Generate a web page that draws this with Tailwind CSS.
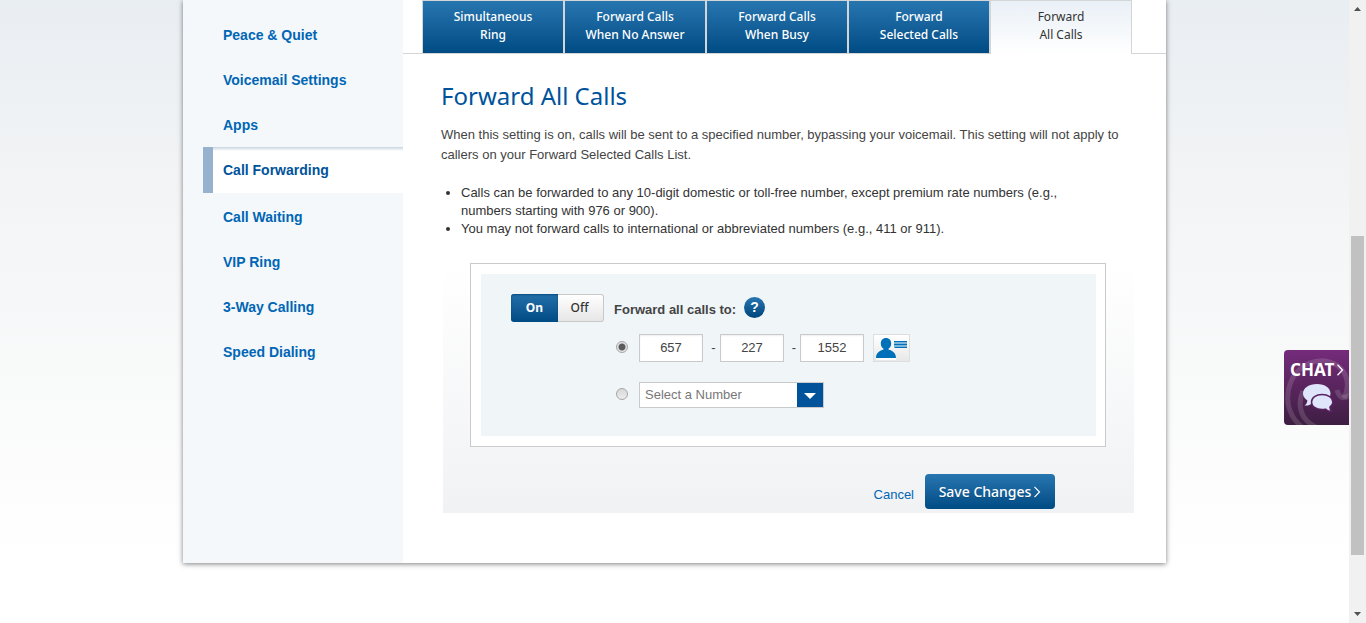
<!DOCTYPE html>
<html lang="en">
<head>
<meta charset="utf-8">
<meta name="viewport" content="width=device-width, initial-scale=1">
<title>Forward All Calls</title>
<script src="https://cdn.jsdelivr.net/npm/@tailwindcss/browser@4"></script>
</head>
<body class="flex h-screen overflow-hidden bg-white font-['Liberation_Sans',Arial,sans-serif] text-[13px] text-[#444]">
<div class="relative min-w-0 flex-1 bg-linear-to-b from-[#e9eef2] via-[#f4f5f6] via-35% to-white to-90%">
  <div class="mx-auto flex w-full max-w-[983px] bg-white shadow-[0_1px_5px_rgba(0,0,0,0.5)]">

    <nav aria-label="Settings" class="flex w-[220px] shrink-0 flex-col bg-[#f4f8fb] pt-3 pl-5 text-sm font-bold text-[#0066b5]">
      <a href="#" class="flex h-[45px] items-center pl-5">Peace &amp; Quiet</a>
      <a href="#" class="flex h-[45px] items-center pl-5">Voicemail Settings</a>
      <a href="#" class="flex h-[45px] items-center pl-5">Apps</a>
      <a href="#" aria-current="page" class="mb-px flex h-[46px] items-center border-l-10 border-[#97b2ce] bg-linear-to-b from-[#c9d5e0] to-white to-[4px] pl-[10px] text-[#00539b]">Call Forwarding</a>
      <a href="#" class="flex h-[45px] items-center pl-5">Call Waiting</a>
      <a href="#" class="flex h-[45px] items-center pl-5">VIP Ring</a>
      <a href="#" class="flex h-[45px] items-center pl-5">3-Way Calling</a>
      <a href="#" class="flex h-[45px] items-center pl-5">Speed Dialing</a>
    </nav>

    <main class="min-w-0 flex-1 pb-[50px]">
      <div class="flex font-['Noto_Sans','Open_Sans',sans-serif] text-xs leading-[18px] font-medium text-white">
        <div class="w-[19px] border-b border-[#d3d5d7]"></div>
        <button class="h-[54px] w-[142px] border border-[#d3d5d7] bg-linear-to-b from-[#2776b0] to-[#004b84] pb-[2px] leading-[18px]">Simultaneous<br>Ring</button>
        <button class="h-[54px] w-[142px] border border-[#d3d5d7] bg-linear-to-b from-[#2776b0] to-[#004b84] pb-[2px] leading-[18px]">Forward Calls<br>When No Answer</button>
        <button class="h-[54px] w-[142px] border border-[#d3d5d7] bg-linear-to-b from-[#2776b0] to-[#004b84] pb-[2px] leading-[18px]">Forward Calls<br>When Busy</button>
        <button class="h-[54px] w-[142px] border border-[#d3d5d7] bg-linear-to-b from-[#2776b0] to-[#004b84] pb-[2px] leading-[18px]">Forward<br>Selected Calls</button>
        <button class="h-[54px] w-[142px] border border-b-0 border-[#d3d5d7] bg-linear-to-b from-[#e9f0f6] to-white pb-[3px] leading-[18px] font-normal text-[#333]">Forward<br>All Calls</button>
        <div class="flex-1 border-b border-[#d3d5d7]"></div>
      </div>

      <div class="pr-8 pl-[38px]">
        <h1 class="mt-6 font-['Noto_Sans','Open_Sans',sans-serif] text-2xl leading-9 text-[#00539b]">Forward All Calls</h1>
        <p class="mt-[11px] leading-5">When this setting is on, calls will be sent to a specified number, bypassing your voicemail. This setting will not apply to callers on your Forward Selected Calls List.</p>
        <ul class="mt-[19px] mr-[60px] list-disc pl-5 leading-[18px] text-[#333]">
          <li>Calls can be forwarded to any 10-digit domestic or toll-free number, except premium rate numbers (e.g., numbers starting with 976 or 900).</li>
          <li>You may not forward calls to international or abbreviated numbers (e.g., 411 or 911).</li>
        </ul>

        <form class="mt-[25px] ml-[2px] bg-linear-to-b from-white to-[#f1f2f4] pb-1">
          <div class="mr-7 ml-[27px] border border-[#c8cacb] bg-white p-[10px] pr-[9px]">
            <div class="bg-[#f0f5f8] pt-5 pr-5 pb-7 pl-[30px]">
              <div class="flex items-center">
                <div class="flex h-7 w-[93px] font-['Noto_Sans','Open_Sans',sans-serif] text-xs">
                  <button type="button" aria-pressed="true" class="w-[47px] rounded-l-[3px] bg-linear-to-b from-[#2270aa] to-[#004b84] font-bold text-white shadow-[inset_0_1px_2px_#0b4a7c]">On</button>
                  <button type="button" aria-pressed="false" class="flex-1 rounded-r-[3px] border border-l-0 border-[#c8c8c8] bg-linear-to-b from-white to-[#e6e6e6] pr-[2px] font-medium text-[#333]">Off</button>
                </div>
                <span class="mt-1 ml-[10px] font-bold text-[#444]">Forward all calls to:</span>
                <button type="button" aria-label="Help" class="mb-px ml-2 size-[21px] rounded-full bg-linear-to-b from-[#2776b0] to-[#00447c] text-sm leading-[21px] font-bold text-white">?</button>
              </div>
              <div class="mt-3 ml-[105px] flex h-7 items-center text-[13px]">
                <input type="radio" name="target" checked aria-label="Forward to the number entered" class="mb-[2px] size-3 appearance-none rounded-full border border-[#a6a6a6] bg-[radial-gradient(circle,#5c5c5c_0_3px,#e4e4e4_4px)]">
                <input aria-label="Area code" value="657" class="ml-[11px] h-7 w-16 border border-[#c8cacb] bg-white pb-px text-center shadow-[inset_0_1px_2px_#eee]">
                <span class="w-[17px] pl-1 text-center">-</span>
                <input aria-label="Prefix" value="227" class="h-7 w-16 border border-[#c8cacb] bg-white pb-px text-center shadow-[inset_0_1px_2px_#eee]">
                <span class="w-4 pl-1 text-center">-</span>
                <input aria-label="Line number" value="1552" class="h-7 w-16 border border-[#c8cacb] bg-white pb-px text-center shadow-[inset_0_1px_2px_#eee]">
                <button type="button" aria-label="Choose from address book" class="ml-[9px] h-7 w-[37px] border border-[#dcdedf] bg-linear-to-b from-white to-[#e8e8e8]">
                  <svg viewBox="0 0 35 26" class="block h-[26px] w-[35px]">
                    <path fill="#fff" d="M2 23h20v2H2z"/>
                    <path fill="#0070b8" d="M12 3c3.200 0 5.200 2.300 5.200 5.400 0 2.300-1 4.200-2.600 5.200v1.200C18.800 15.500 22 18.500 22 23H2c0-4.500 3.200-7.500 7.400-8.200v-1.200c-1.600-1-2.600-2.900-2.600-5.200C6.800 5.300 8.800 3 12 3z"/>
                    <path fill="#7db6da" d="M20 6h13v7H20z"/>
                    <path fill="#0070b8" d="M20 6h13v1H20zM20 9h13v1H20zM21 12h12v1H21z"/>
                  </svg>
                </button>
              </div>
              <div class="mt-5 ml-[105px] flex h-[26px] items-center text-[13px]">
                <input type="radio" name="target" aria-label="Forward to a saved number" class="mb-[2px] size-3 appearance-none rounded-full border border-[#a6a6a6] bg-linear-to-b from-[#d8d8d8] to-[#ececec]">
                <div class="relative ml-[11px] h-[26px] w-[185px]">
                  <select aria-label="Saved number" class="size-full appearance-none border border-[#c8cacb] bg-white pr-7 pb-px pl-[5px] text-[#777]"><option>Select a Number</option></select>
                  <span class="pointer-events-none absolute inset-y-px right-px flex w-[26px] items-center justify-center bg-[#00539b]">
                    <svg viewBox="0 0 12 6" class="mt-[2px] h-[6px] w-3"><path fill="#fff" d="M0 0h12L6 6z"/></svg>
                  </span>
                </div>
              </div>
            </div>
          </div>
          <div class="mt-[27px] mr-[79px] flex items-center justify-end gap-[11px]">
            <a href="#" class="mt-[6px] text-[13px] text-[#0066b5]">Cancel</a>
            <button type="submit" class="flex h-[35px] w-[130px] items-center justify-center gap-[2px] rounded bg-linear-to-b from-[#2776b0] to-[#004b84] font-['Noto_Sans','Open_Sans',sans-serif] text-sm font-medium text-white text-shadow-2xs">Save Changes
              <svg viewBox="0 0 8 12" class="mt-px h-3 w-2"><path fill="none" stroke="#fff" stroke-width="1.200" d="M1.500.8 6.500 6l-5 5.200"/></svg>
            </button>
          </div>
        </form>
      </div>
    </main>
  </div>

  <button aria-label="Chat" class="absolute top-[350px] right-0 h-[75px] w-[65px] overflow-hidden rounded-l-[4px] bg-linear-to-b from-[#752b7b] to-[#3e1e42]">
    <svg viewBox="0 0 65 75" class="absolute inset-0 size-full">
      <g fill="none" stroke="#fff" stroke-opacity=".14" stroke-width="5">
        <path d="M18 77C4 66 1 49 6 34 13 14 36 4 54 16c10 8 12 20 6 32"/>
        <path d="M32 77C16 70 13 54 19 41"/>
        <path d="M53 40c2 8 7 10 14 4"/>
      </g>
      <path fill="#dfe6fb" d="M33 34c8 0 13.500 4 13.500 9.500S41 53 33 53c-1.500 0-3-.2-4.300-.6C27 54.500 24 56 20.500 55.500c2-1.300 2.800-3 2.800-5.200-2.600-1.700-4.300-4-4.300-6.800C19 38 25 34 33 34z"/>
      <path fill="#dfe6fb" stroke="#582360" stroke-width="1.500" d="M38 44.500c-6 0-10.500 3.200-10.500 7.500S32 59.500 38 59.500c1.200 0 2.400-.1 3.400-.4 1.500 1.700 3.600 2.700 6.600 2.200-1.500-1.200-2.200-2.700-2.100-4.200 2-1.300 3-3 3-5.100 0-4.300-4.900-7.500-10.900-7.500z"/>
    </svg>
    <span class="absolute top-[10px] left-[6px] flex items-center gap-[2px] font-['Noto_Sans','Open_Sans',sans-serif] text-[17px] leading-5 font-bold text-white">CHAT
      <svg viewBox="0 0 8 12" class="h-3 w-2"><path fill="none" stroke="#fff" stroke-width="1.300" d="M1.500.8 6.500 6l-5 5.200"/></svg>
    </span>
  </button>
</div>

<div aria-hidden="true" class="flex w-[17px] shrink-0 flex-col items-center bg-[#f1f1f1]">
  <svg viewBox="0 0 17 17" class="size-[17px]"><path fill="#505050" d="M5 11h7L8.500 7z"/></svg>
  <div class="grow-219"></div>
  <div class="w-[13px] grow-319 bg-[#c1c1c1]"></div>
  <div class="grow-51"></div>
  <svg viewBox="0 0 17 17" class="size-[17px]"><path fill="#505050" d="M5 6h7l-3.500 4z"/></svg>
</div>
</body>
</html>
